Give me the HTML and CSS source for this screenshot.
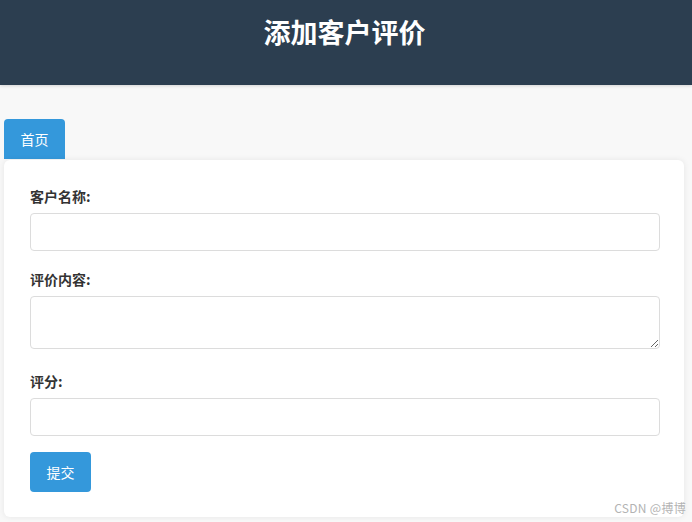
FILE: index.html
```html
<!DOCTYPE html>
<html lang="zh-CN">
<head>
<meta charset="utf-8">
<title>添加客户评价</title>
<link rel="stylesheet" href="styles.css">
</head>
<body>
<header class="site-header">
  <h1 class="site-title">添加客户评价</h1>
</header>
<main class="container">
  <a class="btn btn-home" href="#">首页</a>
  <form class="card">
    <div class="form-group">
      <label class="form-label" for="name">客户名称:</label>
      <input class="form-control" id="name" type="text">
    </div>
    <div class="form-group form-group-area">
      <label class="form-label" for="content">评价内容:</label>
      <textarea class="form-control form-area" id="content"></textarea>
    </div>
    <div class="form-group form-group-last">
      <label class="form-label" for="score">评分:</label>
      <input class="form-control" id="score" type="text">
    </div>
    <button class="btn btn-submit" type="button">提交</button>
  </form>
</main>
<div class="watermark">CSDN @搏博</div>
</body>
</html>
```
FILE: styles.css
```css
html, body {
  margin: 0;
  padding: 0;
}
body {
  background: #f8f8f8;
  font-family: "Noto Sans CJK SC", "Noto Sans", sans-serif;
  color: #333;
  width: 692px;
  height: 522px;
  overflow: hidden;
  position: relative;
}
.site-header {
  background: #2c3e50;
  height: 85px;
  box-shadow: 0 1px 3px rgba(0,0,0,0.15);
  display: flex;
  justify-content: center;
  padding-right: 3px;
  box-sizing: border-box;
}
.site-title {
  margin: 12px 0 0;
  font-size: 27px;
  line-height: 40px;
  font-weight: 700;
  color: #fff;
}
.container {
  padding: 34px 0 0 4px;
  width: 680px;
  display: flex;
  flex-direction: column;
  align-items: flex-start;
}
.btn {
  display: inline-block;
  box-sizing: border-box;
  background: #3498db;
  color: #fff;
  font-family: inherit;
  font-size: 14px;
  line-height: 20px;
  height: 40px;
  width: 61px;
  padding: 10px 0;
  text-align: center;
  border: none;
  border-radius: 4px;
  text-decoration: none;
  cursor: pointer;
}
.btn-home {
  border-radius: 4px 4px 0 0;
  margin-bottom: 1px;
}
.card {
  display: block;
  align-self: stretch;
  background: #fff;
  border-radius: 6px;
  box-shadow: 0 0 6px rgba(0,0,0,0.08);
  padding: 26px 24px 25px 26px;
}
.form-group {
  margin-bottom: 18px;
}
.form-group-area {
  margin-bottom: 22px;
}
.form-group-last {
  margin-bottom: 16px;
}
.form-label {
  display: block;
  font-size: 14px;
  line-height: 20px;
  font-weight: 700;
  color: #333;
  margin-bottom: 7px;
}
.form-control {
  display: block;
  box-sizing: border-box;
  width: 100%;
  height: 38px;
  border: 1px solid #dcdcdc;
  border-radius: 4px;
  font-family: inherit;
  font-size: 14px;
  padding: 8px 10px;
  margin: 0;
  background: #fff;
}
.form-area {
  height: 53px;
  resize: vertical;
}
.watermark {
  position: absolute;
  right: 6px;
  bottom: 6px;
  font-size: 12px;
  line-height: 16px;
  color: #b3b3b3;
  letter-spacing: 0.3px;
}
```
